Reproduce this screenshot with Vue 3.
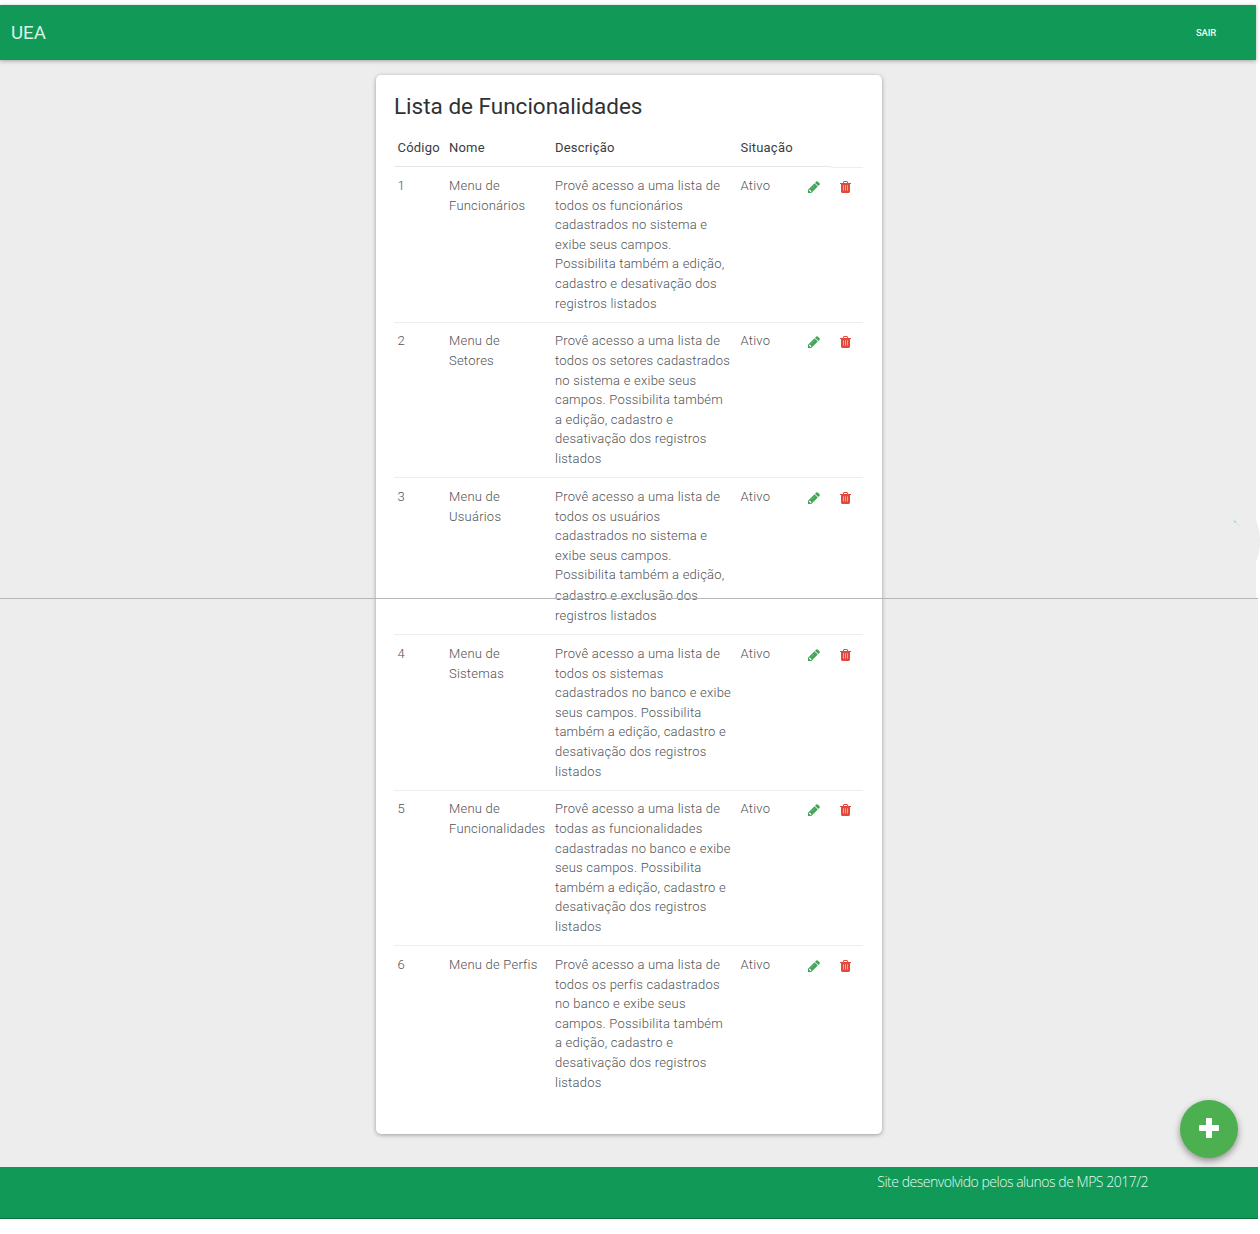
<script setup>
const rows = [
  { id: 1, height: 156, name: ['Menu de', 'Funcionários'], text: ['Provê acesso a uma lista de', 'todos os funcionários', 'cadastrados no sistema e', 'exibe seus campos.', 'Possibilita também a edição,', 'cadastro e desativação dos', 'registros listados'] },
  { id: 2, height: 155, name: ['Menu de', 'Setores'], text: ['Provê acesso a uma lista de', 'todos os setores cadastrados', 'no sistema e exibe seus', 'campos. Possibilita também', 'a edição, cadastro e', 'desativação dos registros', 'listados'] },
  { id: 3, height: 157, name: ['Menu de', 'Usuários'], text: ['Provê acesso a uma lista de', 'todos os usuários', 'cadastrados no sistema e', 'exibe seus campos.', 'Possibilita também a edição,', 'cadastro e exclusão dos', 'registros listados'] },
  { id: 4, height: 156, name: ['Menu de', 'Sistemas'], text: ['Provê acesso a uma lista de', 'todos os sistemas', 'cadastrados no banco e exibe', 'seus campos. Possibilita', 'também a edição, cadastro e', 'desativação dos registros', 'listados'] },
  { id: 5, height: 155, name: ['Menu de', 'Funcionalidades'], text: ['Provê acesso a uma lista de', 'todas as funcionalidades', 'cadastradas no banco e exibe', 'seus campos. Possibilita', 'também a edição, cadastro e', 'desativação dos registros', 'listados'] },
  { id: 6, height: 156, name: ['Menu de Perfis'], text: ['Provê acesso a uma lista de', 'todos os perfis cadastrados', 'no banco e exibe seus', 'campos. Possibilita também', 'a edição, cadastro e', 'desativação dos registros', 'listados'] },
]
</script>

<template>
  <div class="page">
    <header class="navbar">
      <span class="brand">UEA</span>
      <a class="logout">SAIR</a>
    </header>
    <main class="content">
      <section class="card">
        <h1>Lista de Funcionalidades</h1>
        <div class="row head">
          <span>Código</span><span>Nome</span><span>Descrição</span><span>Situação</span>
        </div>
        <div v-for="r in rows" :key="r.id" class="row item" :class="{ snug: r.id === 2 || r.id === 5 }" :style="{ height: r.height + 'px' }">
          <span>{{ r.id }}</span>
          <span><span v-for="l in r.name" :key="l" class="line">{{ l }}</span></span>
          <span :class="{ split: r.id === 3 }"><span v-for="l in r.text" :key="l" class="line">{{ l }}</span></span>
          <span>Ativo</span>
          <span class="icon">
            <svg width="12" height="12" viewBox="0 0 1536 1536">
              <path fill="#43a557" d="M363 1408l91-91-235-235-91 91v107h128v128h107zM832 288l416 416-832 832H0v-416zM1515 384q0 53-37 90l-166 166-416-416 166-165q36-38 90-38 53 0 91 38l235 234q37 39 37 91z" />
              <path d="M330 1080l520-520" stroke="#9bd0a5" stroke-width="50" />
            </svg>
          </span>
          <span class="icon">
            <svg width="11" height="12" viewBox="0 0 1408 1536">
              <path fill="#f3b4ad" d="M160 400h1088v1000H160z" />
              <path fill="#df4a3c" fill-rule="evenodd" d="M512 1216V544h-112v672zM760 1216V544h-112v672zM1008 1216V544h-112v672zM480 256h448l-48-117q-7-9-17-11H546q-10 2-17 11zM1408 288v64q0 14-9 23t-23 9h-96v948q0 83-47 143.500t-113 60.500H288q-66 0-113-58.500T128 1336V384H32q-14 0-23-9t-9-23v-64q0-14 9-23t23-9h309l70-167q15-37 54-63t79-26h320q40 0 79 26t54 63l70 167h309q14 0 23 9t9 23z" />
            </svg>
          </span>
        </div>
      </section>
    </main>
    <footer class="footer">Site desenvolvido pelos alunos de MPS 2017/2</footer>
    <div class="edge"></div>
    <svg class="bulge" width="4" height="42" viewBox="0 0 4 42"><path d="M0 0Q8 21 0 42z" fill="#ededed" /></svg>
    <div class="divider"></div>
    <svg class="speck" width="10" height="10" viewBox="0 0 10 10"><path d="M1 0l3 3-3-1z" fill="#7fe087" /><path d="M3 2l6 6-5-3z" fill="#d8ead9" /></svg>
    <button class="fab" aria-label="Adicionar">
      <svg width="20" height="20" viewBox="0 0 20 20"><path fill="#fff" d="M8 0h4q1 0 1 1v6h6q1 0 1 1v4q0 1-1 1h-6v6q0 1-1 1H8q-1 0-1-1v-6H1q-1 0-1-1V8q0-1 1-1h6V1q0-1 1-1z" /></svg>
    </button>
  </div>
</template>

<style>
body { background: #fff; }
</style>

<style scoped>
.page { position: relative; width: 1260px; height: 1234px; padding-top: 5px; box-sizing: border-box; overflow: hidden; font-family: Roboto, sans-serif; background: #fff; }
.navbar { position: relative; z-index: 1; display: flex; align-items: center; justify-content: space-between; width: 1256px; height: 55px; padding: 0 40px 0 11px; box-sizing: border-box; background: #109957; color: #d9f5e6; box-shadow: 0 1px 4px rgba(0, 0, 0, .32); }
.brand { font-size: 18.7px; line-height: 24px; }
.logout { font-size: 9.5px; color: #effbf4; letter-spacing: -.15px; font-weight: 500; }
.content { display: flex; justify-content: center; align-items: flex-start; width: 1258px; height: 1107px; padding: 15px 1px 0 0; box-sizing: border-box; background: #ededed; }
.card { width: 506px; height: 1059px; box-sizing: border-box; padding: 17px 18px 0 18.5px; border-radius: 5px; background: #fff; box-shadow: 0 1px 4px rgba(0, 0, 0, .34); }
h1 { margin: 0; font-size: 22.5px; line-height: 28px; font-weight: 400; color: #2f3234; white-space: nowrap; }
.row { display: grid; grid-template-columns: 51.5px 106px 185.5px 67px 32px 27px; width: 469px; box-sizing: border-box; font-size: 13px; line-height: 19.6px; white-space: nowrap; }
.row > span { padding-left: 3.5px; }
.head { position: relative; width: 437px; height: 47px; padding-top: 18px; color: #3a3d40; letter-spacing: .2px; border-bottom: 1px solid #e4e6e8; }
.head::after { content: ''; position: absolute; left: 437px; top: 47px; width: 32px; height: 1px; background: #eceeef; }
.item { padding-top: 9px; font-weight: 300; color: #505356; letter-spacing: .22px; border-bottom: 1px solid #eceeef; }
.item.snug { padding-top: 8.4px; }
.item:last-child { border-bottom: 0; }
.line { display: block; }
.split .line:nth-child(5) { padding-bottom: 1px; }
.row > .icon { padding: 5px 0 0 4px; line-height: 0; }
.footer { width: 1258px; height: 52px; padding: 4px 110px 0 0; box-sizing: border-box; text-align: right; background: #109957; border-bottom: 1px solid #08713e; color: #e9fbf1; font: 300 14px/22px "Open Sans", sans-serif; letter-spacing: -.48px; }
.edge { position: absolute; left: 1256px; top: 5px; width: 4px; height: 593px; background: #fff; }
.bulge { position: absolute; left: 1256px; top: 520px; }
.divider { position: absolute; left: 0; top: 598px; width: 1258px; height: 1px; background: #b5b7b6; }
.speck { position: absolute; left: 1233px; top: 520px; }
.fab { position: absolute; left: 1180px; top: 1100px; width: 58px; height: 58px; padding: 0 0 2px; display: flex; align-items: center; justify-content: center; border: 0; border-radius: 50%; background: #4caf50; box-shadow: 0 3px 7px rgba(0, 0, 0, .4); }
</style>
